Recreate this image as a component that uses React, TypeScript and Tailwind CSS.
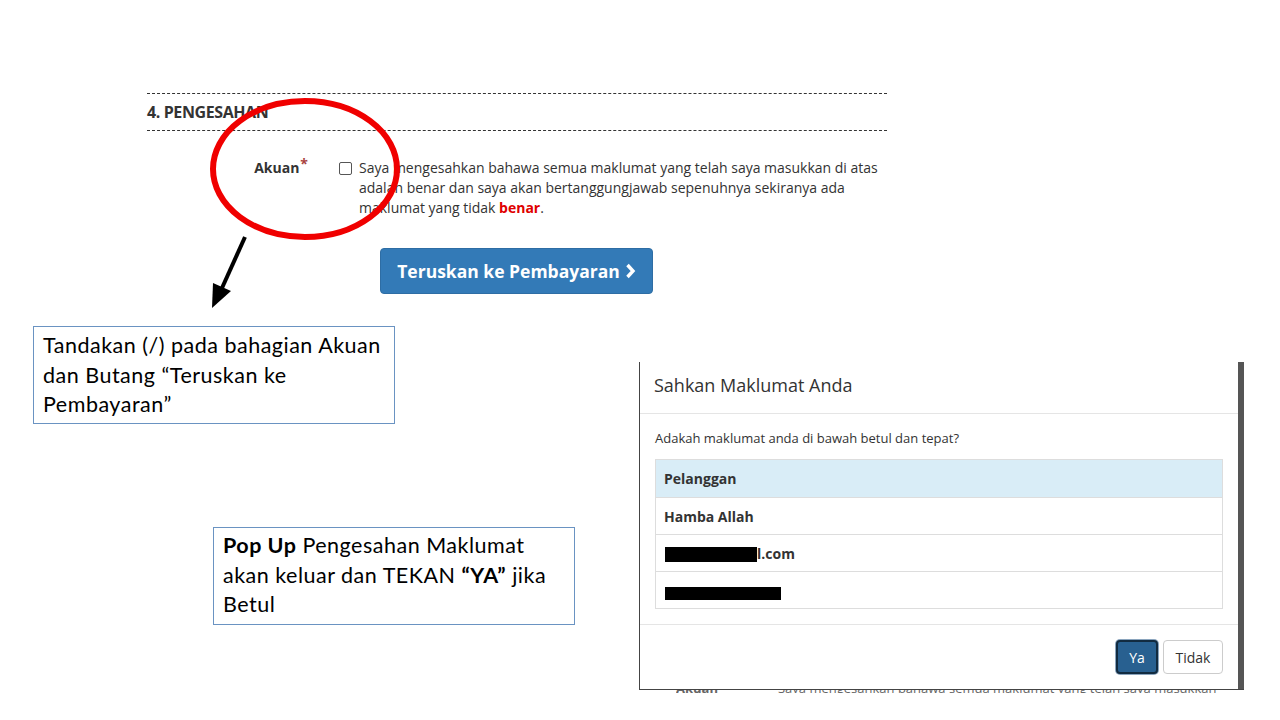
import React from "react";

export default function App() {
  return (
    <div className="relative w-[1280px] h-[720px] bg-white overflow-hidden" style={{ fontFamily: '"Open Sans", sans-serif' }}>
      {/* Form section */}
      <div className="absolute left-[147px] top-[93px] w-[740px] text-[#333]">
        <div className="border-t border-dashed border-[#333]" />
        <div className="h-[36px] flex items-center text-[16px] font-bold tracking-tight">4. PENGESAHAN</div>
        <div className="border-t border-dashed border-[#333]" />
        <div className="flex mt-[27px]">
          <div className="w-[161px] text-right text-[14px] font-bold leading-[20px]">
            Akuan<span className="text-[#a94442] align-top text-[14px] leading-[12px] ml-[1px]">*</span>
          </div>
          <div className="ml-[31px] pt-[4px]">
            <div className="w-[13px] h-[13px] border border-[#555] rounded-[2px] bg-white" />
          </div>
          <div className="ml-[7px] w-[525px] text-[14px] leading-[20px] text-[#333]">
            Saya mengesahkan bahawa semua maklumat yang telah saya masukkan di atas adalah benar dan saya akan bertanggungjawab sepenuhnya sekiranya ada maklumat yang tidak <span className="text-[#e00000] font-bold">benar</span>.
          </div>
        </div>
        <div className="ml-[233px] mt-[30px]">
          <div className="w-[273px] h-[46px] bg-[#337ab7] border border-[#2e6da4] rounded-[4px] flex items-center justify-center text-white text-[17.5px] font-bold gap-[5px]">
            <span>Teruskan ke Pembayaran</span>
            <svg width="11" height="16" viewBox="0 0 11 16"><path d="M2.5 2 L8 8 L2.5 14" stroke="white" strokeWidth="3.4" fill="none" /></svg>
          </div>
        </div>
      </div>

      {/* Red circle and arrow */}
      <svg className="absolute left-0 top-0 pointer-events-none" width="1280" height="720">
        <ellipse cx="305" cy="169" rx="92" ry="68" fill="none" stroke="#f00000" strokeWidth="6" />
        <line x1="245" y1="237" x2="222" y2="288" stroke="black" strokeWidth="4" />
        <polygon points="212,308 213,283 231,291" fill="black" />
      </svg>

      {/* Callout 1 */}
      <div className="absolute left-[33px] top-[326px] w-[362px] h-[98px] border border-[#6a93c2] px-[9px] pt-[4px] text-[21.5px] leading-[29.5px] tracking-[0.5px] text-black whitespace-nowrap" style={{ fontFamily: 'Lato, sans-serif' }}>
        Tandakan (/) pada bahagian Akuan<br />dan Butang “Teruskan ke<br />Pembayaran”
      </div>

      {/* Callout 2 */}
      <div className="absolute left-[213px] top-[527px] w-[362px] h-[98px] border border-[#6a93c2] px-[9px] pt-[3px] text-[21.5px] leading-[29.5px] tracking-[0.5px] text-black whitespace-nowrap" style={{ fontFamily: 'Lato, sans-serif' }}>
        <div><span className="font-bold">Pop Up</span> Pengesahan Maklumat</div>
        <div>akan keluar dan TEKAN <span className="font-bold">“YA”</span> jika</div>
        <div>Betul</div>
      </div>

      {/* Modal */}
      <div className="absolute left-[639px] top-[362px] w-[605px] h-[328px] overflow-hidden">
        <div className="flex h-[327px]">
          <div className="flex-1 bg-white border-l border-[#444] text-[#333] flex flex-col">
            <div className="h-[52px] border-b border-[#e5e5e5] flex items-center px-[14px] pb-[4px] text-[18px]">Sahkan Maklumat Anda</div>
            <div className="px-[15px] pt-[15px]">
              <div className="text-[13px] leading-[18px] mb-[12px]">Adakah maklumat anda di bawah betul dan tepat?</div>
              <div className="border border-[#ddd] w-[568px] text-[14px] font-bold">
                <div className="h-[37px] bg-[#d9edf7] flex items-center px-[8px]">Pelanggan</div>
                <div className="h-[37px] border-t border-[#ddd] flex items-center px-[8px]">Hamba Allah</div>
                <div className="h-[37px] border-t border-[#ddd] flex items-center px-[8px] relative">
                  <span className="inline-block w-[92px] h-[15px] bg-black mt-[2px] ml-[1px]" /><span>l.com</span>
                </div>
                <div className="h-[37px] border-t border-[#ddd] flex items-center px-[8px]">
                  <span className="inline-block w-[116px] h-[13px] bg-black mt-[6px] ml-[1px]" />
                </div>
              </div>
            </div>
            <div className="mt-[15px] border-t border-[#e5e5e5] flex-1 flex justify-end items-start pt-[15px] pr-[15px] gap-[5px] text-[14px]">
              <div className="w-[42px] h-[34px] bg-[#286090] border-2 border-[#122b40] rounded-[4px] text-white flex items-center justify-center ring-1 ring-[#8aa4bd]">Ya</div>
              <div className="w-[60px] h-[34px] bg-white border border-[#ccc] rounded-[4px] flex items-center justify-center text-[#333]">Tidak</div>
            </div>
          </div>
          <div className="w-[6px] bg-[#555]" />
        </div>
        <div className="h-[1px] bg-[#444]" />
      </div>
      <div className="absolute left-[676px] top-[690px] w-[560px] h-[3px] overflow-hidden" aria-hidden="true">
        <div className="flex gap-[60px] text-[13px] text-[#666] -mt-[11px] font-bold">
          <span>Akuan</span>
          <span className="font-normal">Saya mengesahkan bahawa semua maklumat yang telah saya masukkan</span>
        </div>
      </div>
    </div>
  );
}
